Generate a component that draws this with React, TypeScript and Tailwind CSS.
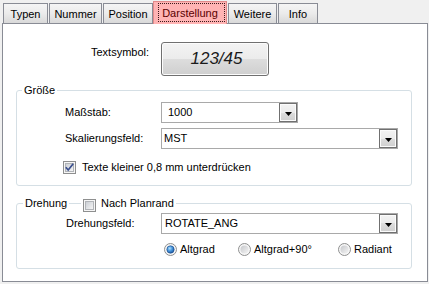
import React from "react";

function Tab({ label, className }: { label: string; className: string }) {
  return (
    <div
      className={`flex justify-center h-[20px] pt-[4px] border border-b-0 border-[#898c95] bg-linear-to-b from-[#f5f5f5] via-[#ebebeb] to-[#d9d9d9] text-black ${className}`}
    >
      {label}
    </div>
  );
}

function CheckBox({ checked, id }: { checked: boolean; id: string }) {
  return (
    <svg width="13" height="13" viewBox="0 0 13 13" className="shrink-0">
      <defs>
        <linearGradient id={id} x1="0" y1="0" x2="1" y2="1">
          <stop offset="0" stopColor="#c9cdd3" />
          <stop offset="1" stopColor="#f7f7f7" />
        </linearGradient>
      </defs>
      <rect x="0.5" y="0.5" width="12" height="12" fill="#f6f6f6" stroke="#8e8f8f" />
      <rect x="2.5" y="2.5" width="8" height="8" fill={`url(#${id})`} stroke="#b1b4b8" />
      {checked && (
        <path d="M2.8 6.2 L5.2 9 L10.2 2.8" fill="none" stroke="#3a4f8e" strokeWidth="1.7" />
      )}
    </svg>
  );
}

function Radio({ checked, id }: { checked: boolean; id: string }) {
  return (
    <svg width="13" height="13" viewBox="0 0 13 13" className="shrink-0">
      <defs>
        <radialGradient id={`${id}-dot`} cx="0.4" cy="0.35" r="0.7">
          <stop offset="0" stopColor="#b9e3fb" />
          <stop offset="0.45" stopColor="#4c9be0" />
          <stop offset="1" stopColor="#174f9a" />
        </radialGradient>
        <linearGradient id={`${id}-off`} x1="0" y1="0" x2="1" y2="1">
          <stop offset="0" stopColor="#c6c8cc" />
          <stop offset="1" stopColor="#f4f4f4" />
        </linearGradient>
      </defs>
      <circle cx="6.5" cy="6.5" r="6" fill="#f6f6f6" stroke="#8e8f8f" />
      {checked ? (
        <circle cx="6.5" cy="6.5" r="3.7" fill={`url(#${id}-dot)`} stroke="#1a4a8a" strokeWidth="0.6" />
      ) : (
        <circle cx="6.5" cy="6.5" r="4" fill={`url(#${id}-off)`} />
      )}
    </svg>
  );
}

function Combo({ text, className, textClass }: { text: string; className: string; textClass: string }) {
  return (
    <div className={`flex items-center h-[21px] border border-[#a9a9a9] bg-white ${className}`}>
      <span className={`flex-1 ${textClass}`}>{text}</span>
      <div className="flex items-center justify-center w-[18px] h-[19px] border border-[#707070] bg-[linear-gradient(to_bottom,#f3f3f3_0%,#ebebeb_50%,#dddddd_50%,#cfcfcf_100%)] shadow-[inset_0_0_0_1px_#fbfbfb]">
        <svg width="7" height="4" viewBox="0 0 7 4" className="mt-[2px]">
          <polygon points="0,0 7,0 3.5,4" fill="#000" />
        </svg>
      </div>
    </div>
  );
}

export default function App() {
  return (
    <div className="w-[429px] h-[284px] bg-[#f0f0f0] overflow-hidden font-['Liberation_Sans',Arial,sans-serif] text-[11px] leading-[13px] text-black">
      {/* Tabs */}
      <div className="flex items-end h-[23px] pl-[3px]">
        <Tab label="Typen" className="w-[45px]" />
        <Tab label="Nummer" className="w-[53px] ml-[1px]" />
        <Tab label="Position" className="w-[50px] ml-[1px]" />
        <div className="relative z-10 flex justify-center w-[74px] h-[23px] -mb-px pt-[5px] border border-b-0 border-[#e08a8a] bg-[#ffb4b4] text-[#5a0000]">
          Darstellung
          <div className="absolute left-[4px] right-[1px] top-[1px] bottom-[2px] border border-dotted border-[#3a1a1a]" />
        </div>
        <Tab label="Weitere" className="w-[49px] ml-[1px]" />
        <Tab label="Info" className="w-[40px] ml-[1px]" />
      </div>

      {/* Panel */}
      <div className="w-[426px] h-[259px] ml-[2px] border border-[#898c95] bg-white flex flex-col">
        {/* Textsymbol */}
        <div className="flex items-start mt-[18px] ml-[88px]">
          <span className="mt-[4px] w-[70px]">Textsymbol:</span>
          <button className="flex items-center justify-center w-[108px] h-[34px] rounded-[3px] border border-[#707070] bg-[linear-gradient(to_bottom,#f3f3f3_0%,#ebebeb_50%,#dddddd_50%,#cfcfcf_100%)] shadow-[inset_0_0_0_1px_#fcfcfc] italic text-[17px] leading-[20px] text-[#1b1b1b] pl-[3px]">
            123/45
          </button>
        </div>

        {/* Größe */}
        <div className="relative mt-[14px] ml-[13px] w-[396px] h-[96px] border border-[#d5dfe5] rounded-[3px]">
          <span className="absolute left-[5px] top-[-7px] px-[2px] bg-white">Größe</span>
          <div className="flex flex-col pt-[11px] pl-[48px]">
            <div className="flex items-center h-[21px]">
              <span className="w-[96px]">Maßstab:</span>
              <Combo text="1000" className="w-[137px]" textClass="pl-[6px]" />
            </div>
            <div className="flex items-center h-[21px] mt-[5px]">
              <span className="w-[96px]">Skalierungsfeld:</span>
              <Combo text="MST" className="w-[237px]" textClass="pl-[2px]" />
            </div>
            <div className="flex items-center mt-[12px] ml-[-2px] gap-[6px]">
              <CheckBox checked id="cb1" />
              <span>Texte kleiner 0,8 mm unterdrücken</span>
            </div>
          </div>
        </div>

        {/* Drehung */}
        <div className="relative mt-[17px] ml-[13px] w-[396px] h-[66px] border border-[#d5dfe5] rounded-[3px]">
          <span className="absolute left-[6px] top-[-7px] px-[2px] bg-white">Drehung</span>
          <div className="absolute left-[64px] top-[-7px] px-[2px] bg-white flex items-start gap-[5px]">
            <span className="mt-[2px] flex">
              <CheckBox checked={false} id="cb2" />
            </span>
            <span>Nach Planrand</span>
          </div>
          <div className="flex flex-col pt-[9px] pl-[49px]">
            <div className="flex items-center h-[21px]">
              <span className="w-[95px]">Drehungsfeld:</span>
              <Combo text="ROTATE_ANG" className="w-[237px]" textClass="pl-[3px]" />
            </div>
            <div className="flex items-center mt-[9px] ml-[98px]">
              <div className="flex items-center gap-[3px] w-[74px]">
                <Radio checked id="r1" />
                <span>Altgrad</span>
              </div>
              <div className="flex items-center gap-[3px] w-[100px]">
                <Radio checked={false} id="r2" />
                <span>Altgrad+90°</span>
              </div>
              <div className="flex items-center gap-[3px]">
                <Radio checked={false} id="r3" />
                <span>Radiant</span>
              </div>
            </div>
          </div>
        </div>
      </div>
    </div>
  );
}
